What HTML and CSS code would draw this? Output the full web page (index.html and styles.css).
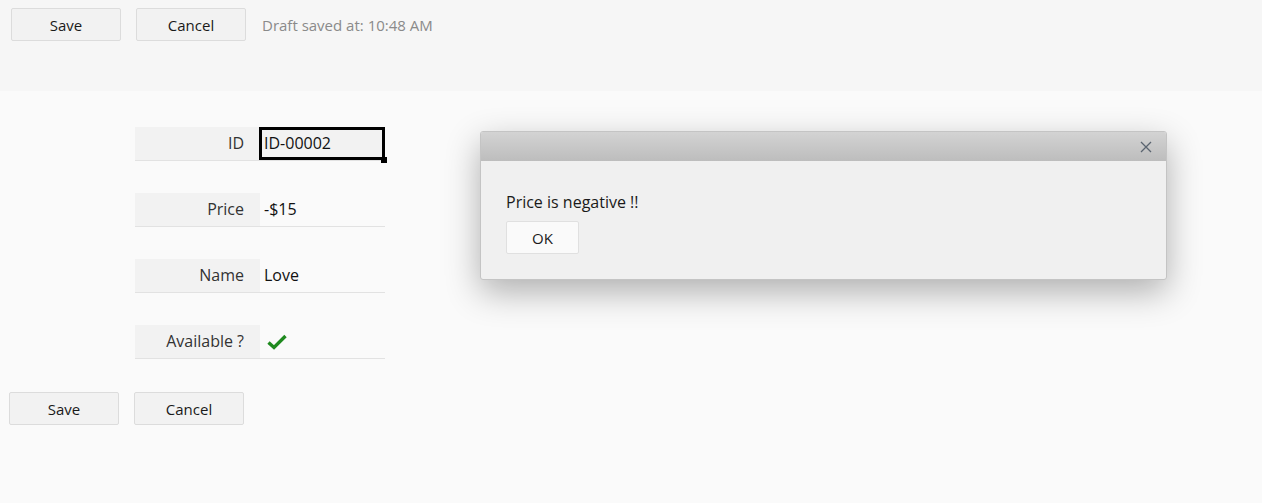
FILE: index.html
```html
<!DOCTYPE html>
<html lang="en">
<head>
    <meta charset="UTF-8">
    <meta name="viewport" content="width=device-width, initial-scale=1.0">
    <title>Product Form</title>
    <link rel="stylesheet" href="styles.css">
</head>
<body>
    <div class="toolbar">
        <button class="btn btn-save">Save</button>
        <button class="btn btn-cancel">Cancel</button>
        <span class="draft-info">Draft saved at: 10:48 AM</span>
    </div>

    <div class="form">
        <div class="row">
            <div class="label">ID</div>
            <div class="value selected">ID-00002<span class="handle"></span></div>
        </div>
        <div class="row">
            <div class="label">Price</div>
            <div class="value">-$15</div>
        </div>
        <div class="row">
            <div class="label">Name</div>
            <div class="value">Love</div>
        </div>
        <div class="row">
            <div class="label">Available ?</div>
            <div class="value">
                <svg class="check" width="20" height="16" viewBox="0 0 20 16">
                    <path d="M1.5 8.5 L7 13.5 L18.5 2" fill="none" stroke="#1f8a1f" stroke-width="3.4"/>
                </svg>
            </div>
        </div>
    </div>

    <div class="footer">
        <button class="btn btn-save">Save</button>
        <button class="btn btn-cancel">Cancel</button>
    </div>

    <div class="dialog">
        <div class="dialog-header">
            <svg class="close" width="12" height="12" viewBox="0 0 12 12">
                <path d="M1 1 L11 11 M11 1 L1 11" stroke="#5a6470" stroke-width="1.3"/>
            </svg>
        </div>
        <div class="dialog-body">
            <p>Price is negative !!</p>
            <button class="btn btn-ok">OK</button>
        </div>
    </div>
</body>
</html>
```

FILE: styles.css
```css
body {
    font-family: 'Open Sans', 'Liberation Sans', sans-serif;
    margin: 0;
    padding: 0;
    background-color: #fafafa;
    color: #222;
    height: 503px;
    position: relative;
}

.btn {
    font-family: inherit;
    font-size: 15px;
    color: #1a1a1a;
    width: 110px;
    height: 33px;
    border: 1px solid #dcdcdc;
    border-radius: 2px;
    background-color: #f2f2f2;
    padding: 0;
}

.toolbar {
    background-color: #f6f6f6;
    height: 91px;
    box-sizing: border-box;
    padding: 8px 11px;
    display: flex;
    align-items: flex-start;
    gap: 15px;
}

.draft-info {
    font-size: 15px;
    color: #8a8a8a;
    margin-left: 1px;
    line-height: 35px;
}

.form {
    margin: 36px 0 0 135px;
    display: flex;
    flex-direction: column;
    gap: 32px;
}

.row {
    display: flex;
    width: 250px;
    height: 34px;
    border-bottom: 1px solid #e2e2e2;
    box-sizing: border-box;
    font-size: 16px;
}

.label {
    width: 125px;
    background-color: #f2f2f2;
    color: #333;
    text-align: right;
    padding-right: 16px;
    box-sizing: border-box;
    line-height: 33px;
}

.value {
    width: 125px;
    padding-left: 4px;
    box-sizing: border-box;
    line-height: 33px;
    color: #111;
    position: relative;
}

.value.selected {
    border: 3px solid #000;
    margin-left: -1px;
    width: 126px;
    padding-left: 2px;
    line-height: 26px;
    background-color: #f2f2f2;
}

.handle {
    position: absolute;
    right: -5px;
    bottom: -6px;
    width: 6px;
    height: 6px;
    background-color: #000;
}

.check {
    margin: 9px 0 0 3px;
    vertical-align: top;
}

.footer {
    display: flex;
    gap: 15px;
    margin: 33px 0 0 9px;
}

.dialog {
    position: absolute;
    left: 480px;
    top: 131px;
    width: 687px;
    height: 149px;
    box-sizing: border-box;
    border: 1px solid #c4c4c4;
    border-radius: 3px;
    background-color: #f0f0f0;
    box-shadow: 0 12px 34px rgba(0, 0, 0, 0.3);
    overflow: hidden;
}

.dialog-header {
    height: 29px;
    background: linear-gradient(#d3d3d3, #bdbdbd);
    display: flex;
    justify-content: flex-end;
    align-items: center;
    padding-right: 14px;
}

.dialog-body {
    padding: 30px 25px;
}

.dialog-body p {
    margin: 0 0 8px;
    font-size: 16px;
    color: #1a1a1a;
}

.btn-ok {
    width: 73px;
    height: 33px;
    background-color: #fafafa;
    border-color: #e0e0e0;
}
```
